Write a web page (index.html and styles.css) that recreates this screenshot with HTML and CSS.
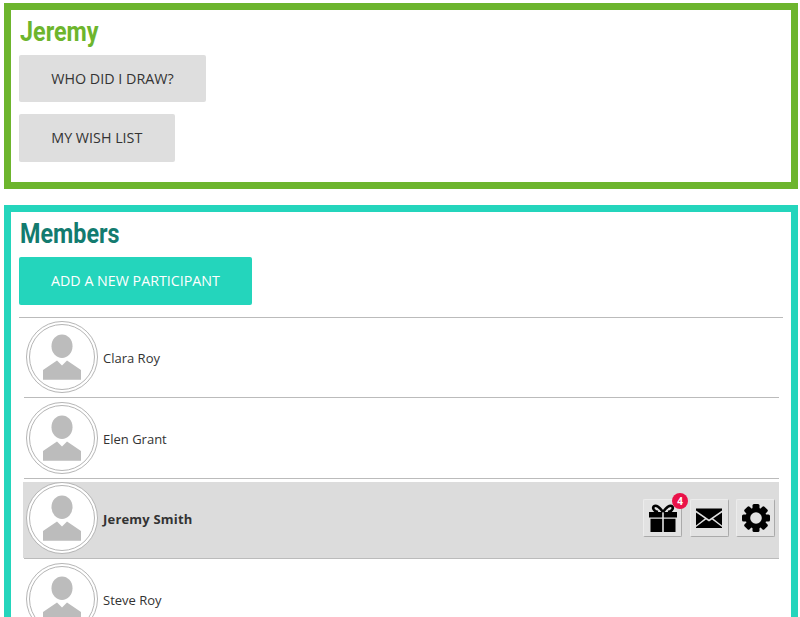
FILE: index.html
```html
<!DOCTYPE html>
<html lang="en">
<head>
    <meta charset="UTF-8">
    <title>Members</title>
    <link rel="stylesheet" href="styles.css">
</head>
<body>

<svg class="defs" width="0" height="0">
    <symbol id="avatar" viewBox="0 0 72 72">
        <circle cx="36" cy="36" r="35.5" fill="#fff" stroke="#b5b5b5"/>
        <circle cx="36" cy="36" r="32.5" fill="#fff" stroke="#b5b5b5"/>
        <ellipse cx="36" cy="25.2" rx="10.5" ry="11.8" fill="#bcbcbc"/>
        <path d="M17 58.7V49L31 39.5 36 44.5 41 39.5 55 49V58.7Z" fill="#bcbcbc"/>
    </symbol>
</svg>

<div class="panel panel-me">
    <h2 class="title">Jeremy</h2>
    <div><a class="btn">Who did I draw?</a></div>
    <div><a class="btn">My wish list</a></div>
</div>

<div class="panel panel-members">
    <h2 class="title">Members</h2>
    <div><a class="btn btn-add">Add a new participant</a></div>

    <ul class="members">
        <li class="member">
            <div class="member-row">
                <svg class="avatar"><use href="#avatar"/></svg>
                <span class="name">Clara Roy</span>
            </div>
        </li>
        <li class="member">
            <div class="member-row">
                <svg class="avatar"><use href="#avatar"/></svg>
                <span class="name">Elen Grant</span>
            </div>
        </li>
        <li class="member current">
            <div class="member-row">
                <svg class="avatar"><use href="#avatar"/></svg>
                <span class="name">Jeremy Smith</span>
                <div class="actions">
                    <a class="icon-btn">
                        <svg viewBox="0 0 30 30" width="30" height="30">
                            <path d="M1 9H14.200V14.500H1ZM15.800 9H29V14.500H15.800ZM2.500 15.800H14.200V29H2.500ZM15.800 15.800H27.500V29H15.800Z" fill="#000"/>
                            <path d="M15 9C12 5 9 2 6.500 3 4 4 5 8 10 9M15 9C18 5 21 2 23.500 3 26 4 25 8 20 9" fill="none" stroke="#000" stroke-width="2.600"/>
                        </svg>
                        <span class="badge">4</span>
                    </a>
                    <a class="icon-btn">
                        <svg viewBox="0 0 30 30" width="30" height="30">
                            <path d="M2 5.500H28V7.500L15 16.500 2 7.500ZM2 9.500L10.800 15.600 2 22.500ZM28 9.500L19.200 15.600 28 22.500ZM12 16.500L15 18.600 18 16.500 28 24V25H2V24Z" fill="#000"/>
                        </svg>
                    </a>
                    <a class="icon-btn">
                        <svg viewBox="0 0 30 30" width="30" height="30">
                            <circle cx="15" cy="15" r="10.500" fill="#000"/>
                            <rect x="11.500" y="1" width="7" height="28" rx="1.500" fill="#000"/>
                            <rect x="11.500" y="1" width="7" height="28" rx="1.500" fill="#000" transform="rotate(45 15 15)"/>
                            <rect x="11.500" y="1" width="7" height="28" rx="1.500" fill="#000" transform="rotate(90 15 15)"/>
                            <rect x="11.500" y="1" width="7" height="28" rx="1.500" fill="#000" transform="rotate(135 15 15)"/>
                            <circle cx="15" cy="15" r="5.800" fill="#e2e2e2"/>
                        </svg>
                    </a>
                </div>
            </div>
        </li>
        <li class="member">
            <div class="member-row">
                <svg class="avatar"><use href="#avatar"/></svg>
                <span class="name">Steve Roy</span>
            </div>
        </li>
    </ul>
</div>

</body>
</html>
```

FILE: styles.css
```css
html, body {
    height: 617px;
    overflow: hidden;
}

body {
    margin: 0;
    padding: 3px 2px 0 4px;
    font-family: "Open Sans", sans-serif;
    color: #333;
    background: #fff;
}

.defs {
    position: absolute;
}

/* panels */
.panel {
    border: 7px solid #6db52d;
    padding: 8px;
    margin-bottom: 16px;
}

.panel-members {
    border-color: #24d5bc;
    padding-bottom: 0;
}

.title {
    margin: 0 0 7px 1px;
    height: 30px;
    line-height: 29px;
    font-family: Roboto, sans-serif;
    font-size: 27px;
    font-weight: 700;
    color: #6db52d;
    transform: scaleX(.865);
    transform-origin: left;
}

.panel-members .title {
    color: #137b6f;
}

/* buttons */
.btn {
    display: inline-block;
    height: 47.4px;
    line-height: 47.4px;
    padding: 0 32.3px;
    margin-bottom: 12px;
    background: #dedede;
    border-radius: 2px;
    font-size: 14.3px;
    text-transform: uppercase;
}

.btn-add {
    height: 48px;
    line-height: 48px;
    padding: 0 32px;
    font-size: 14.25px;
    background: #24d5bc;
    color: #fff;
}

/* member list */
.members {
    list-style: none;
    margin: 0;
    padding: 0 4px 0 5px;
    border-top: 1px solid #bbb;
}

.member {
    padding-top: 3.5px;
    border-bottom: 1px solid #bbb;
    font-size: 13px;
}

.member-row {
    display: flex;
    align-items: center;
    height: 76px;
    padding-left: 1.5px;
}

.member.current .member-row {
    background: #dcdcdc;
    margin-left: -1px;
    padding-left: 2.5px;
    font-weight: 700;
    letter-spacing: .2px;
}

.avatar {
    align-self: flex-start;
    width: 72px;
    height: 72px;
    margin-right: 5.5px;
    flex-shrink: 0;
}

.name {
    margin-top: -2px;
}

.actions {
    margin-left: auto;
    display: flex;
    gap: 7.5px;
    padding-right: 4px;
    margin-top: -4px;
}

.icon-btn {
    position: relative;
    display: flex;
    align-items: center;
    justify-content: center;
    width: 39px;
    height: 38px;
    background: #e2e2e2;
    box-sizing: border-box;
    border-radius: 2px;
    border: 1px solid #ececec;
    border-right-color: #aaa;
    border-bottom-color: #aaa;
}

.badge {
    position: absolute;
    top: -7px;
    right: -7px;
    width: 16px;
    height: 16px;
    line-height: 16px;
    border-radius: 50%;
    background: #ea1249;
    color: #fff;
    font-size: 10px;
    font-weight: 700;
    text-align: center;
    letter-spacing: 0;
}
```
